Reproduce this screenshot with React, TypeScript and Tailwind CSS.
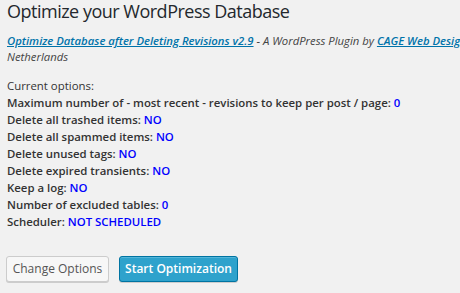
const options: { label: string; value: string }[] = [
  { label: "Maximum number of - most recent - revisions to keep per post / page:", value: "0" },
  { label: "Delete all trashed items:", value: "NO" },
  { label: "Delete all spammed items:", value: "NO" },
  { label: "Delete unused tags:", value: "NO" },
  { label: "Delete expired transients:", value: "NO" },
  { label: "Keep a log:", value: "NO" },
  { label: "Number of excluded tables:", value: "0" },
  { label: "Scheduler:", value: "NOT SCHEDULED" },
];

export default function App() {
  return (
    <div className="h-[293px] w-[460px] overflow-hidden bg-[#f1f1f1] font-['Open_Sans',sans-serif] text-[#333]">
      <div className="w-[700px] pl-[7px]">
        <h2 className="text-[18px] font-normal leading-[23px] tracking-[-0.5px] text-[#23282d]">
          Optimize your WordPress Database
        </h2>

        <p className="mt-[10px] text-[11.3px] italic leading-[16px] text-[#444]">
          <span className="whitespace-nowrap">
            <a href="#" className="font-semibold text-[#0073aa] underline">
              Optimize Database after Deleting Revisions v2.9
            </a>{" "}
            - A WordPress Plugin by{" "}
            <a href="#" className="font-semibold text-[#0073aa] underline">
              CAGE Web Design
            </a>{" "}
            | Rolf van Gelder, Eindhoven, The
          </span>
          <br />
          Netherlands
        </p>

        <div className="mt-[12px] text-[11.4px] leading-[17px]">
          <div>Current options:</div>
          {options.map((o) => (
            <div key={o.label} className="font-semibold">
              {o.label} <span className="text-[#0000ff]">{o.value}</span>
            </div>
          ))}
        </div>

        <div className="-ml-px mt-[26px] flex gap-[10px]">
          <button
            type="button"
            className="h-[26px] w-[103px] rounded-[3px] border border-[#cccccc] bg-[#f7f7f7] text-[12px] leading-[24px] text-[#555] shadow-[0_1px_0_#cccccc]"
          >
            Change Options
          </button>
          <button
            type="button"
            className="h-[26px] w-[119px] rounded-[3px] border border-[#0074a2] bg-[#2ea2cc] text-[12px] font-semibold leading-[24px] text-white shadow-[inset_0_1px_0_rgba(120,200,230,0.5),0_1px_0_rgba(0,0,0,0.15)]"
          >
            Start Optimization
          </button>
        </div>
      </div>
    </div>
  );
}
